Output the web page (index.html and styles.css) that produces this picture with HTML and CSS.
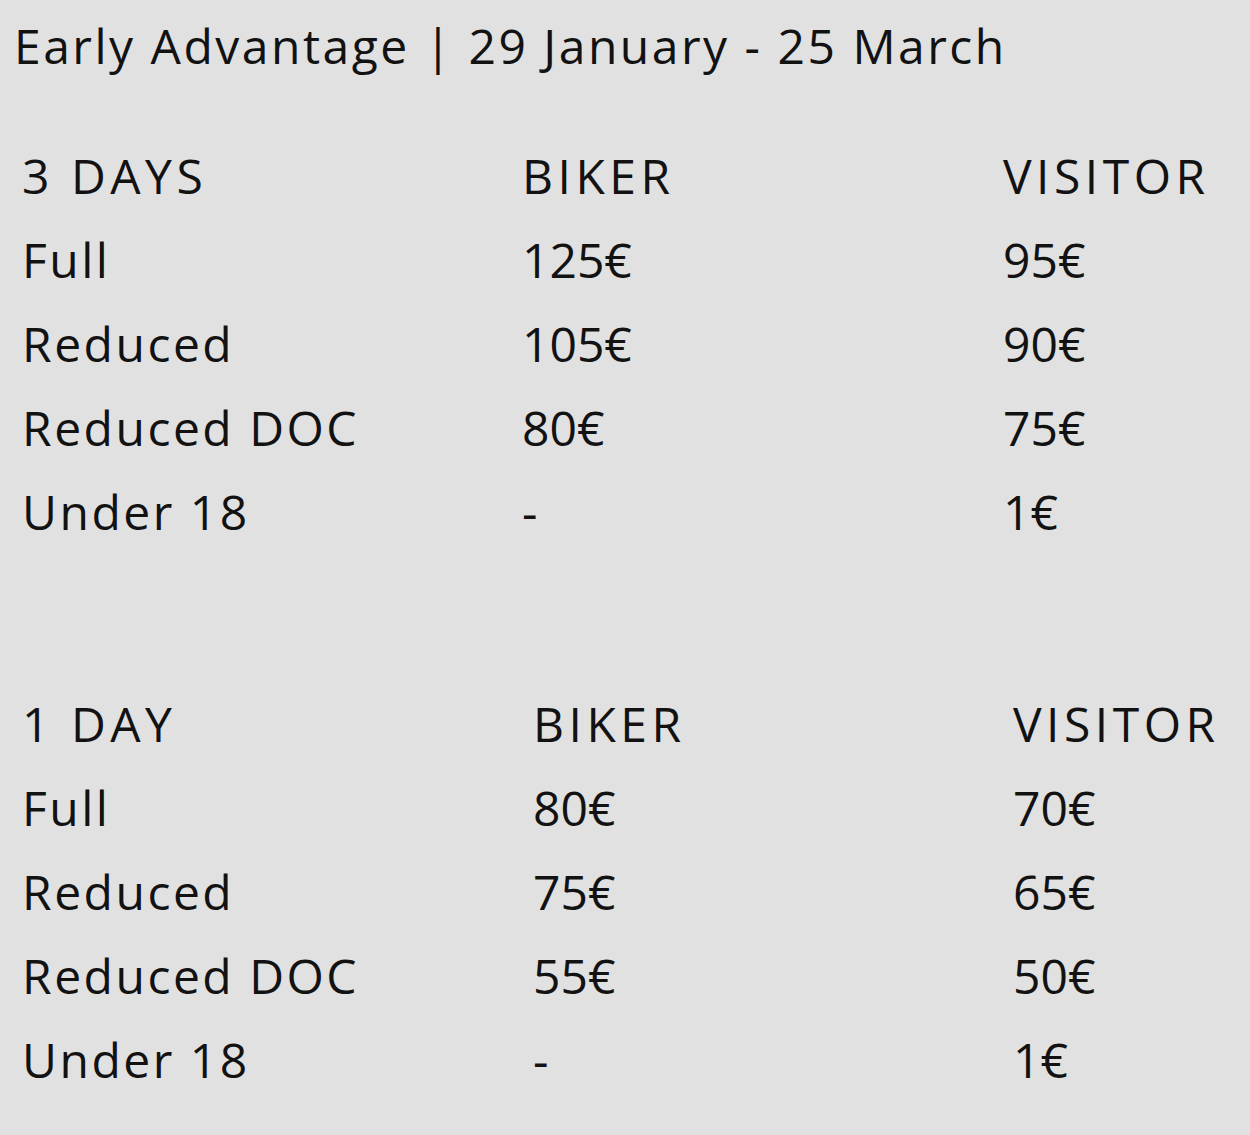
FILE: index.html
```html
<!DOCTYPE html>
<html lang="en">
<head>
<meta charset="utf-8">
<title>Early Advantage</title>
<link rel="stylesheet" href="styles.css">
</head>
<body>
<main class="page">
  <h1 class="title">Early Advantage | 29 January - 25 March</h1>

  <section class="prices prices-3">
    <div class="cell head">3 DAYS</div><div class="cell head">BIKER</div><div class="cell head">VISITOR</div>
    <div class="cell">Full</div><div class="cell num">125€</div><div class="cell num">95€</div>
    <div class="cell">Reduced</div><div class="cell num">105€</div><div class="cell num">90€</div>
    <div class="cell">Reduced DOC</div><div class="cell num">80€</div><div class="cell num">75€</div>
    <div class="cell">Under 18</div><div class="cell num">-</div><div class="cell num">1€</div>
  </section>

  <section class="prices prices-1">
    <div class="cell head">1 DAY</div><div class="cell head">BIKER</div><div class="cell head">VISITOR</div>
    <div class="cell">Full</div><div class="cell num">80€</div><div class="cell num">70€</div>
    <div class="cell">Reduced</div><div class="cell num">75€</div><div class="cell num">65€</div>
    <div class="cell">Reduced DOC</div><div class="cell num">55€</div><div class="cell num">50€</div>
    <div class="cell">Under 18</div><div class="cell num">-</div><div class="cell num">1€</div>
  </section>
</main>
</body>
</html>
```
FILE: styles.css
```css
html, body {
  margin: 0;
  padding: 0;
  background: #e1e1e1;
}
body {
  font-family: "Open Sans", "Noto Sans", sans-serif;
  color: #121212;
}
.page {
  padding: 4px 0 0 14px;
}
.title {
  margin: 0;
  font-weight: 400;
  font-size: 48px;
  line-height: 84px;
  letter-spacing: 2.5px;
  white-space: nowrap;
}
.prices {
  display: grid;
  grid-auto-rows: 84px;
  font-size: 48px;
  line-height: 84px;
  letter-spacing: 2.5px;
  white-space: nowrap;
}
.head {
  letter-spacing: 4.5px;
}
.num {
  letter-spacing: 0;
}
.prices-3 {
  margin: 46px 0 0 8px;
  grid-template-columns: 500px 481px auto;
}
.prices-1 {
  margin: 128px 0 0 8px;
  grid-template-columns: 511px 480px auto;
}
```
